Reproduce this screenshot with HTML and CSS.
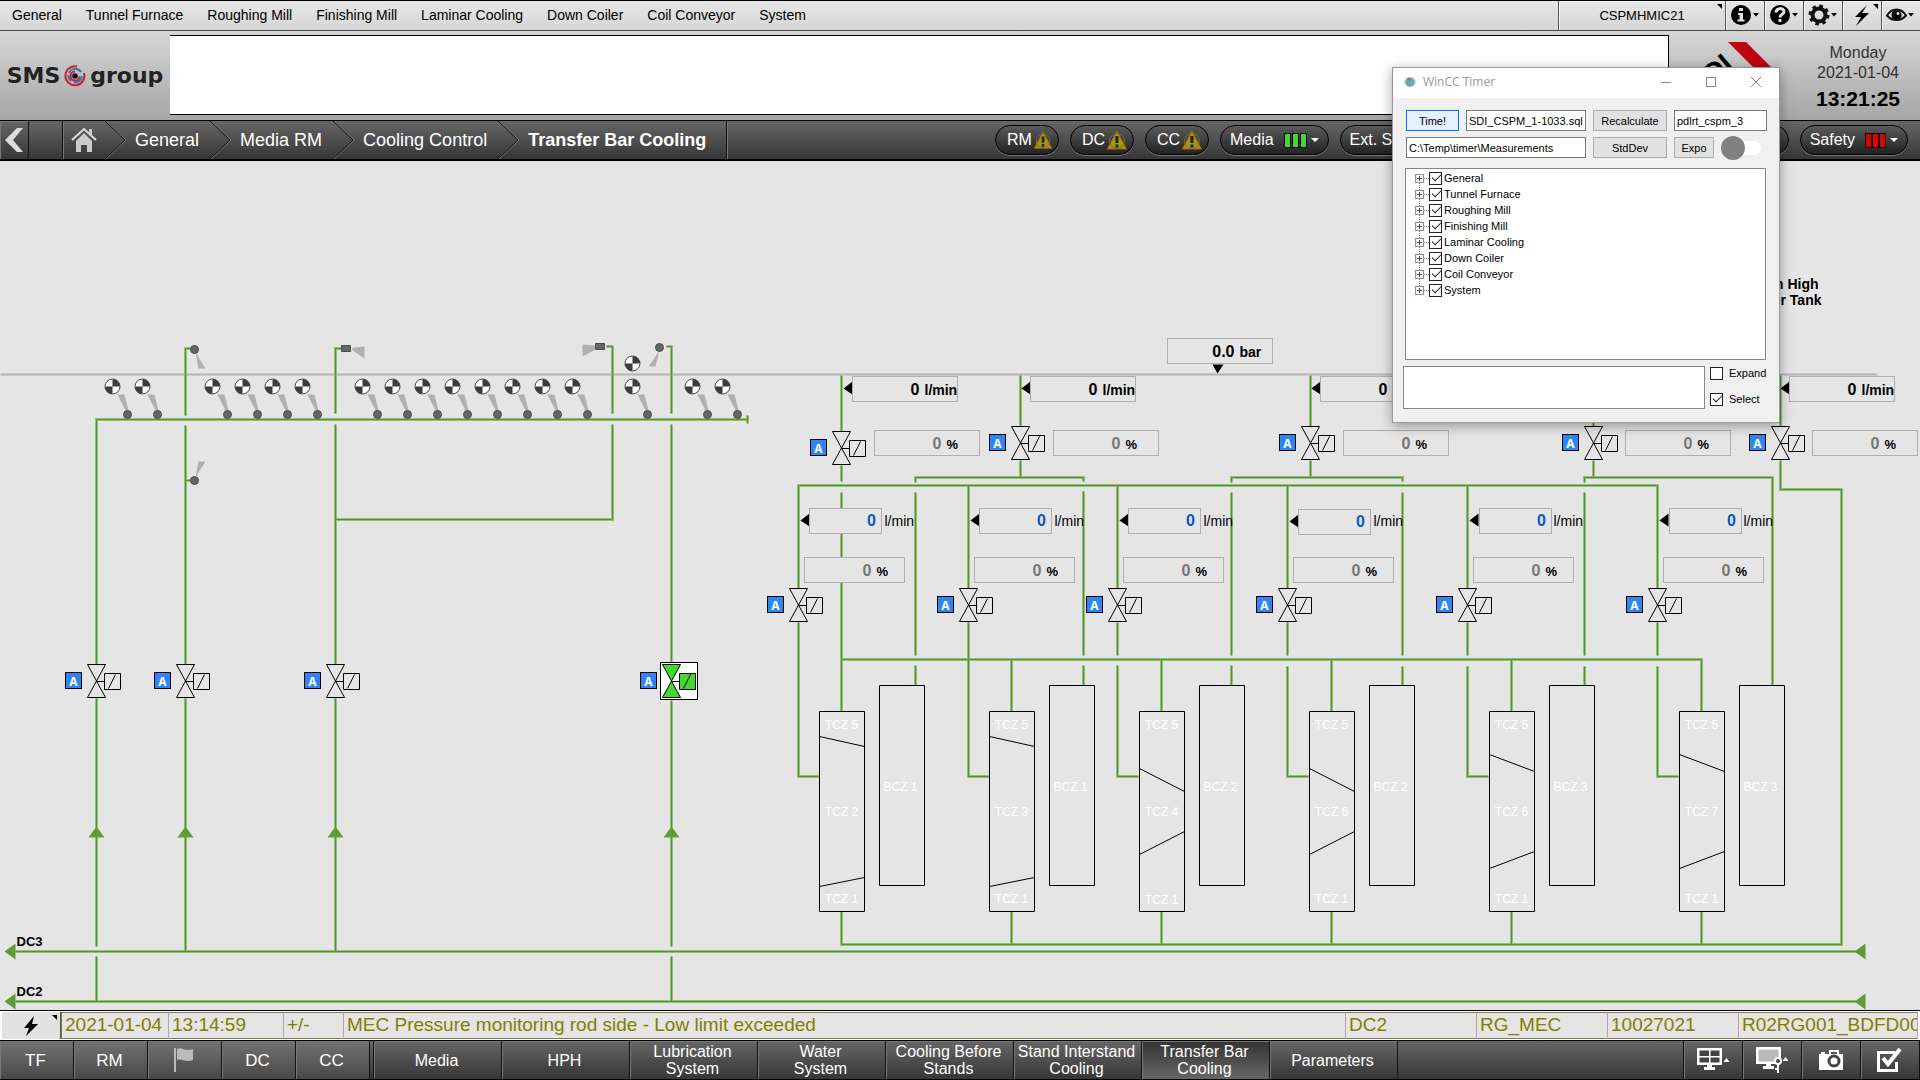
FILE: index.html
```html
<!DOCTYPE html>
<html lang="en">
<head>
<meta charset="utf-8">
<title>Transfer Bar Cooling</title>
<link rel="stylesheet" href="styles.css">
</head>
<body>
<div class="screen">

<div class="menubar">
  <nav class="menu" aria-label="Areas">
    <a href="#">General</a><a href="#">Tunnel Furnace</a><a href="#">Roughing Mill</a><a href="#">Finishing Mill</a><a href="#">Laminar Cooling</a><a href="#">Down Coiler</a><a href="#">Coil Conveyor</a><a href="#">System</a>
  </nav>
  <button class="host corner">CSPMHMIC21</button>
  <button class="tool" aria-label="Information"><svg width="39" height="29" viewBox="0 0 39 29"><circle cx="15" cy="14" r="10"/><path fill="#e0e0e0" d="M13 7h4v3h-4zM12 12h5v6.500h1.500v2h-7v-2h2v-4.500h-1.500z"/><path d="M27 12h6l-3 3.500z"/></svg></button>
  <button class="tool" aria-label="Help"><svg width="39" height="29" viewBox="0 0 39 29"><circle cx="15" cy="14" r="10"/><path fill="none" stroke="#e0e0e0" stroke-width="3" d="M11 11.500c0-5 8-5 8-1 0 3-4 2.500-4 6"/><path fill="#e0e0e0" d="M13.500 18h3v3h-3z"/><path d="M27 12h6l-3 3.500z"/></svg></button>
  <button class="tool" aria-label="Settings"><svg width="39" height="29" viewBox="0 0 39 29"><circle cx="15" cy="14" r="6.500" fill="none" stroke="#111" stroke-width="4"/><circle cx="15" cy="14" r="9" fill="none" stroke="#111" stroke-width="3" stroke-dasharray="3.500 3.570"/><path d="M27 12h6l-3 3.500z"/></svg></button>
  <button class="tool corner" aria-label="Alarms"><svg width="39" height="29" viewBox="0 0 39 29"><path d="M24 4 12 16h6l-5 9 13-13h-7z"/></svg></button>
  <button class="tool" aria-label="View"><svg width="39" height="29" viewBox="0 0 39 29"><path fill="none" stroke="#111" stroke-width="2" d="M5 14.500c5-8 14-8 19 0-5 6-14 6-19 0z"/><circle cx="14.500" cy="14" r="5"/><circle cx="16" cy="12.500" r="1.500" fill="#ddd"/><path d="M26 12h6l-3 3.500z"/></svg></button>
</div>

<header class="header">
  <div class="brand">
    <span>SMS</span>
    <svg width="22" height="22" viewBox="0 0 22 22" aria-hidden="true"><g fill="none" stroke-width="2"><path stroke="#d2202c" d="M13 1.500A9.500 9.500 0 1 0 20 8"/><path stroke="#d2202c" d="M19.500 14a9.500 9.500 0 0 1-6 6"/><path stroke="#1f7fc1" d="M5 8a6.800 6.800 0 0 1 12-1M17.700 11a6.800 6.800 0 0 1-8 6.500M4.500 10a6.800 6.800 0 0 0 3 6"/><path stroke="#d2202c" d="M11 6.500a4.500 4.500 0 1 0 4.500 5"/></g><circle cx="11" cy="11" r="2.800" fill="#111"/></svg>
    <span>group</span>
  </div>
  <div class="message-panel"></div>
  <svg class="plant-logo" width="127" height="89" viewBox="0 0 127 89" aria-hidden="true"><path fill="#c0040f" d="M59 11h18l30 30h-18z"/><text class="plant-name" transform="translate(44 54) rotate(-40)">DI</text></svg>
  <div class="clock"><span>Monday</span><span>2021-01-04</span><time>13:21:25</time></div>
</header>

<div class="pathbar">
  <button class="back" aria-label="Back"><svg width="28" height="38" viewBox="0 0 28 38"><path fill="#ddd" d="M17 7h6L13 19l10 12h-6L5 19z"/></svg></button>
  <nav class="crumbs" aria-label="Breadcrumb">
    <a class="home" href="#" aria-label="Home"><svg width="26" height="26" viewBox="0 0 26 26"><path fill="none" stroke="#ddd" stroke-width="2" d="M1 13 13 2l12 11"/><path fill="#ccc" d="M18 2h3v7l-3-3zM13 6l8 8v11h-5v-7h-6v7H5V14z"/><path fill="#ccc" d="M11 14h4v2h-4z"/></svg></a>
    <svg class="chevron" viewBox="0 0 21 38"><path d="m0 0 20 19L0 38"/></svg>
    <a href="#">General</a>
    <svg class="chevron" viewBox="0 0 21 38"><path d="m0 0 20 19L0 38"/></svg>
    <a href="#">Media RM</a>
    <svg class="chevron" viewBox="0 0 21 38"><path d="m0 0 20 19L0 38"/></svg>
    <a href="#">Cooling Control</a>
    <svg class="chevron" viewBox="0 0 21 38"><path d="m0 0 20 19L0 38"/></svg>
    <a class="current" href="#">Transfer Bar Cooling</a>
  </nav>
  <div class="pills">
    <button class="pill short">RM<svg width="20" height="20" viewBox="0 0 20 20"><use href="#warning"/></svg></button>
    <button class="pill short">DC<svg width="20" height="20" viewBox="0 0 20 20"><use href="#warning"/></svg></button>
    <button class="pill short">CC<svg width="20" height="20" viewBox="0 0 20 20"><use href="#warning"/></svg></button>
    <button class="pill status">Media<span class="bars ok"><i></i><i></i><i></i></span><b class="caret"></b></button>
    <button class="pill wide">Ext. S</button>
    <button class="pill status">Safety<span class="bars bad"><i></i><i></i><i></i></span><b class="caret"></b></button>
  </div>
</div>

<main class="process">
<svg class="schematic" viewBox="0 161 1920 849">
  <defs>
    <g id="warning"><path fill="#a09a10" stroke="#b5650c" d="M10 1 19.500 19H.5z"/><circle cx="10" cy="11" r="7.500" fill="none" stroke="#777038"/><path fill="#222" d="M8.500 6h3v7h-3zM8.500 14.500h3v3h-3z"/></g>
    <g id="valve">
      <rect class="mode-box" x="-31" y="-9" width="16" height="16"/>
      <path class="outline" d="M-9-17H9L-9 16H9zM0 0H8M8-8H24V8H8zM12 7 19-7"/>
    </g>
    <g id="roll"><circle r="7.500" fill="#fff" stroke="#444"/><path fill="#3c3c3c" d="M0 0V-7.500A7.500 7.500 0 0 1 7.500 0zM0 0V7.500A7.500 7.500 0 0 1-7.500 0z"/><path stroke="#999" d="M0-7V7M-7 0H7"/></g>
    <g id="nozzle"><path class="spray" d="M0 0-10-20H-3L1-4z"/><circle r="4" class="body"/></g>
    <g id="station"><use href="#roll"/><use href="#nozzle" x="15" y="28"/></g>
    <path id="tip" d="M0 0 9-7V6z"/>
    <path id="up" d="M0-6 8 5H-8z"/>
    <path id="pipes" d="M747 415V423M747 419H96V664M96 698V946M96 956V1001
      M190 348H185V415M185 425V664M185 698V951M185 480H190
      M341 348H335V413M335 424V664M335 698V951M335 519H612V424M612 413V346H606
      M666 346H671V413M671 424V662M671 700V946M671 956V1001
      M15 951H1856M15 1001H1856
      M841 375V431M841 465V481M841 492V711
      M1020 375V426M1020 460V477M915 482V477H1083V481
      M1310 375V426M1310 460V477M1231 482V477H1402V481
      M1593 375V426M1593 460V477M1584 482V477H1772V685
      M1780 375V426M1780 460V489H1841V944H841V911
      M798 588V485H1657V588
      M915 492V655M915 665V685M1083 491V655M1083 665V685M1231 492V655M1231 665V685
      M1402 492V655M1402 666V685M1584 492V655M1584 666V685
      M798 622V776H819M968 485V588M968 622V776H989
      M1117 485V588M1117 622V655M1117 665V776H1138
      M1287 485V588M1287 622V655M1287 666V776H1308
      M1467 485V588M1467 622V655M1467 666V776H1488
      M1657 622V655M1657 666V776H1678
      M841 659H1701V711M1011 659V711M1161 659V711M1331 659V711M1511 659V711
      M1011 911V944M1161 911V944M1331 911V944M1511 911V944M1701 911V944"/>
  </defs>

  <g transform="translate(.5 .5)">
    <path class="strip" d="M0 374H1877"/>
    <use href="#pipes" class="pipe-edge"/>
    <use href="#pipes" class="pipe-core"/>

    <g class="flow">
      <use href="#up" x="96" y="832"/><use href="#up" x="185" y="832"/><use href="#up" x="335" y="832"/><use href="#up" x="671" y="832"/>
      <path d="M4 951 15 943V959zM4 1001 15 993V1009zM1854 951 1865 943V959zM1854 1001 1865 993V1009z"/>
    </g>

    <!-- spray heads over and under the strip -->
    <path class="spray" d="M195 352 198 368H205zM195 477 198 461H205zM351 349 353 347 364 346V358zM595 349 594 345 582 344V356zM659 350 648 366H655z"/>
    <g class="body"><circle cx="194" cy="349" r="4"/><circle cx="194" cy="480" r="4"/><circle cx="659" cy="347" r="4"/><path d="M341 345H350V351H341zM595 343H604V349H595z"/></g>
    <use href="#station" x="112" y="386"/><use href="#station" x="142" y="386"/>
    <use href="#station" x="212" y="386"/><use href="#station" x="242" y="386"/><use href="#station" x="272" y="386"/><use href="#station" x="302" y="386"/>
    <use href="#station" x="362" y="386"/><use href="#station" x="392" y="386"/><use href="#station" x="422" y="386"/><use href="#station" x="452" y="386"/><use href="#station" x="482" y="386"/><use href="#station" x="512" y="386"/><use href="#station" x="542" y="386"/><use href="#station" x="572" y="386"/>
    <use href="#station" x="632" y="386"/><use href="#roll" x="632" y="363"/>
    <use href="#station" x="692" y="386"/><use href="#station" x="722" y="386"/>

    <!-- valves -->
    <rect class="selected" x="660" y="662" width="37" height="37"/>
    <path class="open" d="M662 664H680L662 697H680zM679 673H695V689H679z"/>
    <use href="#valve" x="96" y="681"/><use href="#valve" x="185" y="681"/><use href="#valve" x="335" y="681"/><use href="#valve" x="671" y="681"/>
    <use href="#valve" x="841" y="448"/><use href="#valve" x="1020" y="443"/><use href="#valve" x="1310" y="443"/><use href="#valve" x="1593" y="443"/><use href="#valve" x="1780" y="443"/>
    <use href="#valve" x="798" y="605"/><use href="#valve" x="968" y="605"/><use href="#valve" x="1117" y="605"/><use href="#valve" x="1287" y="605"/><use href="#valve" x="1467" y="605"/><use href="#valve" x="1657" y="605"/>
    <g class="mode">
      <text x="73" y="685">A</text><text x="162" y="685">A</text><text x="312" y="685">A</text><text x="648" y="685">A</text>
      <text x="818" y="452">A</text><text x="997" y="447">A</text><text x="1287" y="447">A</text><text x="1570" y="447">A</text><text x="1757" y="447">A</text>
      <text x="775" y="609">A</text><text x="945" y="609">A</text><text x="1094" y="609">A</text><text x="1264" y="609">A</text><text x="1444" y="609">A</text><text x="1634" y="609">A</text>
    </g>

    <!-- readings -->
    <use href="#tip" x="843" y="388"/><use href="#tip" x="1021" y="388"/><use href="#tip" x="1311" y="388"/><use href="#tip" x="1780" y="388"/>
    <path d="M1212 364H1223L1217 373z"/>
    <g class="reading" transform="translate(1167 338)"><rect width="105" height="25"/><text class="number" x="67" y="18">0.0</text><text class="unit" x="72" y="18">bar</text></g>
    <g class="reading" transform="translate(852 376)"><rect width="105" height="25"/><text class="number" x="67" y="18">0</text><text class="unit" x="72" y="18">l/min</text></g>
    <g class="reading" transform="translate(1030 376)"><rect width="105" height="25"/><text class="number" x="67" y="18">0</text><text class="unit" x="72" y="18">l/min</text></g>
    <g class="reading" transform="translate(1320 376)"><rect width="105" height="25"/><text class="number" x="67" y="18">0</text></g>
    <g class="reading" transform="translate(1789 376)"><rect width="105" height="25"/><text class="number" x="67" y="18">0</text><text class="unit" x="72" y="18">l/min</text></g>

    <g class="reading position" transform="translate(874 430)"><rect width="105" height="25"/><text class="number" x="67" y="18">0</text><text class="unit" x="72" y="18">%</text></g>
    <g class="reading position" transform="translate(1053 430)"><rect width="105" height="25"/><text class="number" x="67" y="18">0</text><text class="unit" x="72" y="18">%</text></g>
    <g class="reading position" transform="translate(1343 430)"><rect width="105" height="25"/><text class="number" x="67" y="18">0</text><text class="unit" x="72" y="18">%</text></g>
    <g class="reading position" transform="translate(1625 430)"><rect width="105" height="25"/><text class="number" x="67" y="18">0</text><text class="unit" x="72" y="18">%</text></g>
    <g class="reading position" transform="translate(1812 430)"><rect width="105" height="25"/><text class="number" x="67" y="18">0</text><text class="unit" x="72" y="18">%</text></g>

    <g class="reading position" transform="translate(804 557)"><rect width="100" height="25"/><text class="number" x="67" y="18">0</text><text class="unit" x="72" y="18">%</text></g>
    <g class="reading position" transform="translate(974 557)"><rect width="100" height="25"/><text class="number" x="67" y="18">0</text><text class="unit" x="72" y="18">%</text></g>
    <g class="reading position" transform="translate(1123 557)"><rect width="100" height="25"/><text class="number" x="67" y="18">0</text><text class="unit" x="72" y="18">%</text></g>
    <g class="reading position" transform="translate(1293 557)"><rect width="100" height="25"/><text class="number" x="67" y="18">0</text><text class="unit" x="72" y="18">%</text></g>
    <g class="reading position" transform="translate(1473 557)"><rect width="100" height="25"/><text class="number" x="67" y="18">0</text><text class="unit" x="72" y="18">%</text></g>
    <g class="reading position" transform="translate(1663 557)"><rect width="100" height="25"/><text class="number" x="67" y="18">0</text><text class="unit" x="72" y="18">%</text></g>

    <use href="#tip" x="800" y="520"/><use href="#tip" x="970" y="520"/><use href="#tip" x="1119" y="520"/><use href="#tip" x="1289" y="521"/><use href="#tip" x="1469" y="520"/><use href="#tip" x="1659" y="520"/>
    <g class="setpoint-unit"><text x="884" y="525">l/min</text><text x="1054" y="525">l/min</text><text x="1203" y="525">l/min</text><text x="1373" y="525">l/min</text><text x="1553" y="525">l/min</text><text x="1743" y="525">l/min</text></g>

    <!-- cooling zones -->
    <g class="zone" transform="translate(841 711)"><path d="M-22 0H23V200H-22zM38-26H83V174H38zM-22 25 23 35M-22 175 23 166"/><text x="0" y="17">TCZ 5</text><text x="0" y="104">TCZ 2</text><text x="0" y="191">TCZ 1</text><text x="59" y="79">BCZ 1</text></g>
    <g class="zone" transform="translate(1011 711)"><path d="M-22 0H23V200H-22zM38-26H83V174H38zM-22 25 23 35M-22 175 23 166"/><text x="0" y="17">TCZ 5</text><text x="0" y="104">TCZ 3</text><text x="0" y="191">TCZ 1</text><text x="59" y="79">BCZ 1</text></g>
    <g class="zone" transform="translate(1161 711)"><path d="M-22 0H23V200H-22zM38-26H83V174H38zM-22 57 23 80M-22 143 23 120"/><text x="0" y="17">TCZ 5</text><text x="0" y="104">TCZ 4</text><text x="0" y="192">TCZ 1</text><text x="59" y="79">BCZ 2</text></g>
    <g class="zone" transform="translate(1331 711)"><path d="M-22 0H23V200H-22zM38-26H83V174H38zM-22 57 23 80M-22 143 23 120"/><text x="0" y="17">TCZ 5</text><text x="0" y="104">TCZ 6</text><text x="0" y="191">TCZ 1</text><text x="59" y="79">BCZ 2</text></g>
    <g class="zone" transform="translate(1511 711)"><path d="M-22 0H23V200H-22zM38-26H83V174H38zM-22 43 23 60M-22 157 23 140"/><text x="0" y="17">TCZ 5</text><text x="0" y="104">TCZ 6</text><text x="0" y="191">TCZ 1</text><text x="59" y="79">BCZ 3</text></g>
    <g class="zone" transform="translate(1701 711)"><path d="M-22 0H23V200H-22zM38-26H83V174H38zM-22 43 23 60M-22 157 23 140"/><text x="0" y="17">TCZ 5</text><text x="0" y="104">TCZ 7</text><text x="0" y="191">TCZ 1</text><text x="59" y="79">BCZ 3</text></g>

    <g class="line-name"><text x="16" y="945">DC3</text><text x="16" y="995">DC2</text></g>
    <g class="source"><text x="1818" y="288">From High</text><text x="1821" y="304">Water Tank</text></g>
  </g>

  <foreignObject x="809" y="508" width="73" height="26"><input class="setpoint" value="0" aria-label="TCZ 2 flow setpoint"></foreignObject>
  <foreignObject x="979" y="508" width="73" height="26"><input class="setpoint" value="0" aria-label="TCZ 3 flow setpoint"></foreignObject>
  <foreignObject x="1128" y="508" width="73" height="26"><input class="setpoint" value="0" aria-label="TCZ 4 flow setpoint"></foreignObject>
  <foreignObject x="1298" y="509" width="73" height="26"><input class="setpoint" value="0" aria-label="TCZ 6 flow setpoint"></foreignObject>
  <foreignObject x="1479" y="508" width="73" height="26"><input class="setpoint" value="0" aria-label="TCZ 6 exit flow setpoint"></foreignObject>
  <foreignObject x="1669" y="508" width="73" height="26"><input class="setpoint" value="0" aria-label="TCZ 7 flow setpoint"></foreignObject>
</svg>
</main>

<div class="alarmbar">
  <button class="alarm-button corner" aria-label="Alarm list"><svg width="16" height="20" viewBox="0 0 16 20"><path d="M11 0 1 12h5L3 20 15 8H9z"/></svg></button>
  <table class="alarms"><tbody><tr><td class="c-date">2021-01-04</td><td class="c-time">13:14:59</td><td class="c-sign">+/-</td><td>MEC Pressure monitoring rod side - Low limit exceeded</td><td class="c-tag">DC2</td><td class="c-tag">RG_MEC</td><td class="c-tag">10027021</td><td class="c-id">R02RG001_BDFD00</td></tr></tbody></table>
</div>

<nav class="bottombar" aria-label="Pictures">
  <div class="areas">
    <button>TF</button><button>RM</button>
    <button aria-label="Flag"><svg width="22" height="26" viewBox="0 0 22 26"><path fill="#bbb" d="M1 1h2v24H1zM4 2c4-3 8 3 16 0v11c-7 3-11-2-16 0z"/></svg></button>
    <button>DC</button><button>CC</button>
  </div>
  <div class="pages">
    <button>Media</button><button>HPH</button><button>Lubrication<br>System</button><button>Water<br>System</button><button>Cooling Before<br>Stands</button><button>Stand Interstand<br>Cooling</button><button class="active">Transfer Bar<br>Cooling</button><button>Parameters</button>
  </div>
  <div class="tools">
    <button aria-label="Screen layout"><svg width="32" height="24" viewBox="0 0 32 24"><path fill="#fff" d="M0 0h25v17H0zM10 17h5v2h3v3H7v-3h3z"/><path fill="#444" d="M2.500 2.500H12V8H2.500zM13.500 2.500h9V8h-9zM2.500 9.500H12v5H2.500zM13.500 9.500h9v5h-9z"/><path fill="#fff" d="m26.500 14 3-4 3 4z"/></svg></button>
    <button aria-label="Screen lock"><svg width="32" height="26" viewBox="0 0 32 26"><path fill="#fff" d="M0 0h25v17H0zM10 17h5v2h3v3H7v-3h3z"/><path fill="#bbb" d="M2.500 2.500h20v12h-20z"/><circle cx="22" cy="14" r="3" fill="#444" stroke="#fff" stroke-width="2"/><path fill="none" stroke="#fff" stroke-width="2" d="M22 17v9M22 22h-3"/><path fill="#fff" d="m26.500 14 3-4 3 4z"/></svg></button>
    <button aria-label="Screenshot"><svg width="24" height="20" viewBox="0 0 24 20"><path fill="#fff" d="M2 2h4v2h4V0h10v4h4v16H0V4h2zM12 2v2h6V2z" fill-rule="evenodd"/><circle cx="15" cy="11" r="5" fill="none" stroke="#444" stroke-width="3"/></svg></button>
    <button aria-label="Acknowledge"><svg width="26" height="24" viewBox="0 0 26 24"><path fill="none" stroke="#fff" stroke-width="3" d="M18 4.500H1.500v18h18V14"/><path fill="none" stroke="#fff" stroke-width="4" d="m6 10 5 6L23 1"/></svg></button>
  </div>
</nav>

<section class="dialog" aria-label="WinCC Timer">
  <div class="titlebar">
    <svg width="14" height="14" viewBox="0 0 14 14" aria-hidden="true"><ellipse cx="7" cy="7" rx="6.500" ry="5" fill="#c9e3d8"/><circle cx="7" cy="7" r="4.500" fill="#8a9a86"/><circle cx="7.500" cy="7.500" r="3" fill="#4fb6c4"/><path fill="#e0524f" d="M4 3h3v4z"/></svg>
    <span>WinCC Timer</span>
    <button aria-label="Minimize"><svg width="12" height="12" viewBox="0 0 12 12"><path d="M1 6.500h10"/></svg></button>
    <button aria-label="Maximize"><svg width="12" height="12" viewBox="0 0 12 12"><path d="M1.500 1.500h9v9h-9z"/></svg></button>
    <button aria-label="Close"><svg width="12" height="12" viewBox="0 0 12 12"><path d="m1 1 10 10M11 1 1 11"/></svg></button>
  </div>
  <div class="form">
    <button class="primary">Time!</button><input value="SDI_CSPM_1-1033.sql" aria-label="Script"><button>Recalculate</button><input value="pdlrt_cspm_3" aria-label="Database">
    <input class="folder" value="C:\Temp\timer\Measurements" aria-label="Folder"><button>StdDev</button>
    <div class="export"><button>Expo</button><input class="toggle" type="checkbox" aria-label="Run"></div>
  </div>
  <ul class="tree">
    <li><button aria-label="Expand General"></button><input type="checkbox" id="t1" checked><label for="t1">General</label></li>
    <li><button aria-label="Expand Tunnel Furnace"></button><input type="checkbox" id="t2" checked><label for="t2">Tunnel Furnace</label></li>
    <li><button aria-label="Expand Roughing Mill"></button><input type="checkbox" id="t3" checked><label for="t3">Roughing Mill</label></li>
    <li><button aria-label="Expand Finishing Mill"></button><input type="checkbox" id="t4" checked><label for="t4">Finishing Mill</label></li>
    <li><button aria-label="Expand Laminar Cooling"></button><input type="checkbox" id="t5" checked><label for="t5">Laminar Cooling</label></li>
    <li><button aria-label="Expand Down Coiler"></button><input type="checkbox" id="t6" checked><label for="t6">Down Coiler</label></li>
    <li><button aria-label="Expand Coil Conveyor"></button><input type="checkbox" id="t7" checked><label for="t7">Coil Conveyor</label></li>
    <li><button aria-label="Expand System"></button><input type="checkbox" id="t8" checked><label for="t8">System</label></li>
  </ul>
  <div class="output">
    <textarea aria-label="Output"></textarea>
    <div class="options">
      <div><input type="checkbox" id="expand"><label for="expand">Expand</label></div>
      <div><input type="checkbox" id="select" checked><label for="select">Select</label></div>
    </div>
  </div>
</section>

</div>
</body>
</html>
```
FILE: styles.css
```css
* { box-sizing: border-box; }
body { margin: 0; background: #e5e5e5; color: #000; font: 14px/16px "Liberation Sans", Arial, sans-serif; }
button, input, textarea { font: inherit; color: inherit; margin: 0; padding: 0; border: 0; border-radius: 0; background: none; }
button { white-space: nowrap; }
a { color: inherit; text-decoration: none; }
svg { display: block; }

.screen { position: relative; min-height: 100vh; display: flex; flex-direction: column; overflow: hidden; }

/* menu bar */
.menubar { display: flex; height: 31px; border-top: 1px solid #000; border-bottom: 1px solid #4a4a4a; background: linear-gradient(#e6e6e6, #d6d6d6); }
.menu { flex: 1; display: flex; align-items: center; gap: 24px; padding: 0 0 2px 12px; white-space: nowrap; }
.host, .tool { border-left: 1px solid #555; box-shadow: inset 1px 1px #f6f6f6; position: relative; }
.host { width: 167px; font-size: 13px; }
.tool { width: 39px; overflow: hidden; }
.corner::after { content: ""; position: absolute; top: 3px; right: 3px; border: solid #000; border-width: 5px 0 0 5px; border-left-color: transparent; }

/* header */
.header { display: flex; height: 89px; background: linear-gradient(#d6d6d6, #a6a6a6); }
.brand { width: 170px; display: flex; align-items: center; justify-content: center; gap: 4px; font: bold 22px/24px "DejaVu Sans", sans-serif; color: #222; }
.message-panel { flex: 1; margin: 4px 0 5px; background: #fff; border: solid #000; border-width: 1px 1px 1px 0; }
.plant-logo { overflow: hidden; }
.plant-name { font: bold 28px "Liberation Sans", Arial, sans-serif; }
.clock { width: 124px; padding-top: 12px; display: flex; flex-direction: column; align-items: center; font-size: 16px; line-height: 20px; color: #333; }
.clock time { font-size: 21px; font-weight: bold; line-height: 32px; color: #000; }

/* breadcrumb bar */
.pathbar { display: flex; align-items: stretch; height: 41px; padding-right: 12px; border: solid #000; border-width: 1px 0 2px; background: linear-gradient(#666, #363636); color: #fff; }
.back { width: 29px; border-right: 1px solid #111; box-shadow: inset 1px 1px #777; }
.crumbs { flex: 1; display: flex; align-items: center; margin-left: 33px; border-left: 1px solid #111; box-shadow: inset 1px 0 #777; font-size: 18px; white-space: nowrap; }
.crumbs a { padding: 0 11px 0 9px; }
.crumbs .home { padding: 0 8px; }
.crumbs .current { align-self: stretch; padding-right: 20px; font-weight: bold; line-height: 38px; border-right: 1px solid #111; box-shadow: 1px 0 #777; }
.chevron { width: 21px; height: 38px; fill: none; stroke: #181818; filter: drop-shadow(1px 0 #777); }
.pills { width: 913px; display: flex; align-items: center; gap: 11px; font-size: 16px; }
.pill { height: 30px; padding: 0 9px; display: flex; align-items: center; border: 1px solid #000; border-radius: 15px; background: linear-gradient(#5a5a5a, #222); box-shadow: 0 1px #777; }
.short { width: 64px; gap: 2px; padding: 0 6px 0 11px; }
.status { gap: 10px; }
.wide { flex: 1; }
.bars { display: flex; gap: 1px; }
.bars i { width: 7px; height: 15px; border: 1px solid #000; }
.ok i { background: #43d82c; }
.bad { gap: 0; }
.bad i { background: #e00000; }
.caret { border: 4px solid transparent; border-top-color: #fff; border-bottom: 0; margin-left: -6px; }

/* process picture */
.process { flex: 1; }
.schematic { width: 100%; height: auto; }
.strip { stroke: #b4b4b4; stroke-width: 2; }
.pipe-edge, .pipe-core { fill: none; stroke-linecap: butt; }
.pipe-edge { stroke: #93be7c; stroke-width: 3; }
.pipe-core { stroke: #56942d; stroke-width: 1; }
.flow { fill: #5f9c37; }
.spray { fill: #b0b0b0; }
.body { fill: #666; stroke: #4c4c4c; }
.outline { fill: none; stroke: #000; }
.mode-box { fill: #2f86f2; stroke: #000; }
.mode text { fill: #fff; font: bold 12px "Open Sans", sans-serif; text-anchor: middle; }
.selected { fill: #fff; stroke: #000; }
.open { fill: #43d82c; }
.reading rect { fill: #e5e5e5; stroke: #b0b0b0; }
.reading text { font: bold 14px "Liberation Sans", Arial, sans-serif; }
.reading .number { font-size: 16px; text-anchor: end; }
.position .number { fill: #777; }
.position .unit { font-size: 13px; }
.setpoint-unit text { font-size: 14px; }
.setpoint { display: block; width: 73px; height: 26px; padding: 0 5px; border: 1px solid #b0b0b0; background: #e5e5e5; color: #0b57c0; font-size: 16px; font-weight: bold; text-align: right; }
.zone path { fill: none; stroke: #000; }
.zone text { fill: #fff; font-size: 12px; text-anchor: middle; }
.line-name text { font-size: 13px; font-weight: bold; }
.source text { font-size: 14px; font-weight: bold; text-anchor: end; }

/* alarm line */
.alarmbar { display: flex; height: 30px; padding: 1px 2px; border-top: 1px solid #000; background: #fff; }
.alarm-button { position: relative; width: 59px; display: flex; align-items: center; justify-content: center; border-right: 1px solid #555; background: #e2e2e2; }
.alarms { flex: 1; width: 0; height: 27px; table-layout: fixed; border-collapse: collapse; border: 1px solid #7c7c50; background: #e5e5e5; color: #808000; font-size: 19px; line-height: 22px; }
.alarms td { padding: 0 0 2px 3px; border-right: 1px solid #aaa; overflow: hidden; white-space: nowrap; }
.c-date { width: 107px; }
.c-time { width: 115px; }
.c-sign { width: 60px; }
.c-tag { width: 131px; }
.c-id { width: 179px; }

/* bottom bar */
.bottombar { display: flex; height: 40px; border: solid #000; border-width: 1px 0; background: linear-gradient(#666, #363636); color: #fff; font-size: 16px; line-height: 17px; }
.bottombar button { display: flex; align-items: center; justify-content: center; border-right: 1px solid #111; box-shadow: inset 1px 1px #777; }
.bottombar > div { display: flex; }
.areas { font-size: 17px; }
.areas button { width: 74px; padding-right: 2px; background: linear-gradient(#727272, #484848); }
.pages { margin-left: 3px; border-left: 1px solid #111; }
.pages button { width: 128px; padding-right: 2px; }
.pages .active { background: linear-gradient(#333, #666); }
.tools { margin-left: auto; border-left: 1px solid #111; }
.tools button { width: 59px; }

/* timer window */
.dialog { position: absolute; top: 67px; right: 140px; width: 388px; border: 1px solid #999; background: #f0f0f0; box-shadow: 0 3px 12px rgba(0, 0, 0, .35); font-size: 11px; line-height: 14px; }
.titlebar { display: flex; align-items: center; height: 30px; padding: 0 1px 2px 10px; background: #fff; color: #999; font: 12px/16px "Open Sans", sans-serif; }
.titlebar span { flex: 1; padding-left: 6px; }
.titlebar button { width: 45px; height: 28px; display: flex; align-items: center; justify-content: center; }
.titlebar button svg { fill: none; stroke: #888; }
.form { display: grid; grid-template-columns: 53px 120px 74px 93px; gap: 6px 7px; padding: 12px 12px 10px 13px; }
.form button { height: 21px; background: #e1e1e1; border: 1px solid #adadad; }
.form .primary { background: #e5f1fb; border-color: #0078d7; }
.form input { width: 100%; height: 21px; padding: 0 2px; background: #fff; border: 1px solid #7a7a7a; }
.form .folder { grid-column: span 2; }
.export { display: flex; align-items: center; gap: 7px; }
.export button { width: 40px; }
.dialog .toggle { appearance: none; position: relative; width: 40px; height: 14px; padding: 0; border: 0; border-radius: 7px; background: #fff; }
.toggle::before { content: ""; position: absolute; left: 0; top: -5px; width: 24px; height: 24px; border-radius: 50%; background: #808080; }
.tree { margin: 0 13px 6px 12px; height: 192px; padding: 1px 0 0 9px; list-style: none; background: #fff; border: 1px solid #828790; }
.tree li { position: relative; display: flex; align-items: center; height: 16px; }
.tree li::before { content: ""; position: absolute; left: 9px; top: 8px; width: 5px; border-top: 1px dotted #888; }
.tree li + li::after { content: ""; position: absolute; left: 4px; top: -4px; height: 8px; border-left: 1px dotted #888; }
.tree button { position: relative; width: 9px; height: 9px; margin-right: 5px; border: 1px solid #919191; background: #f6f6f6; }
.tree button::before, .tree button::after { content: ""; position: absolute; background: #3050a0; }
.tree button::before { left: 1px; top: 3px; width: 5px; height: 1px; }
.tree button::after { left: 3px; top: 1px; width: 1px; height: 5px; }
.tree label { padding-left: 2px; }
.tree input, .options input { appearance: none; position: relative; flex: none; width: 13px; height: 13px; border: 1px solid #222; background: #fff; }
.tree input:checked::after, .options input:checked::after { content: ""; position: absolute; left: 2px; top: 1px; width: 8px; height: 4px; border: solid #222; border-width: 0 0 1px 1px; transform: rotate(-45deg); }
.output { display: flex; padding: 0 10px 13px; }
.output textarea { width: 302px; height: 43px; background: #fff; border: 1px solid #828790; resize: none; }
.options { display: flex; flex-direction: column; gap: 12px; padding-left: 5px; }
.options div { display: flex; align-items: center; gap: 6px; }
```
